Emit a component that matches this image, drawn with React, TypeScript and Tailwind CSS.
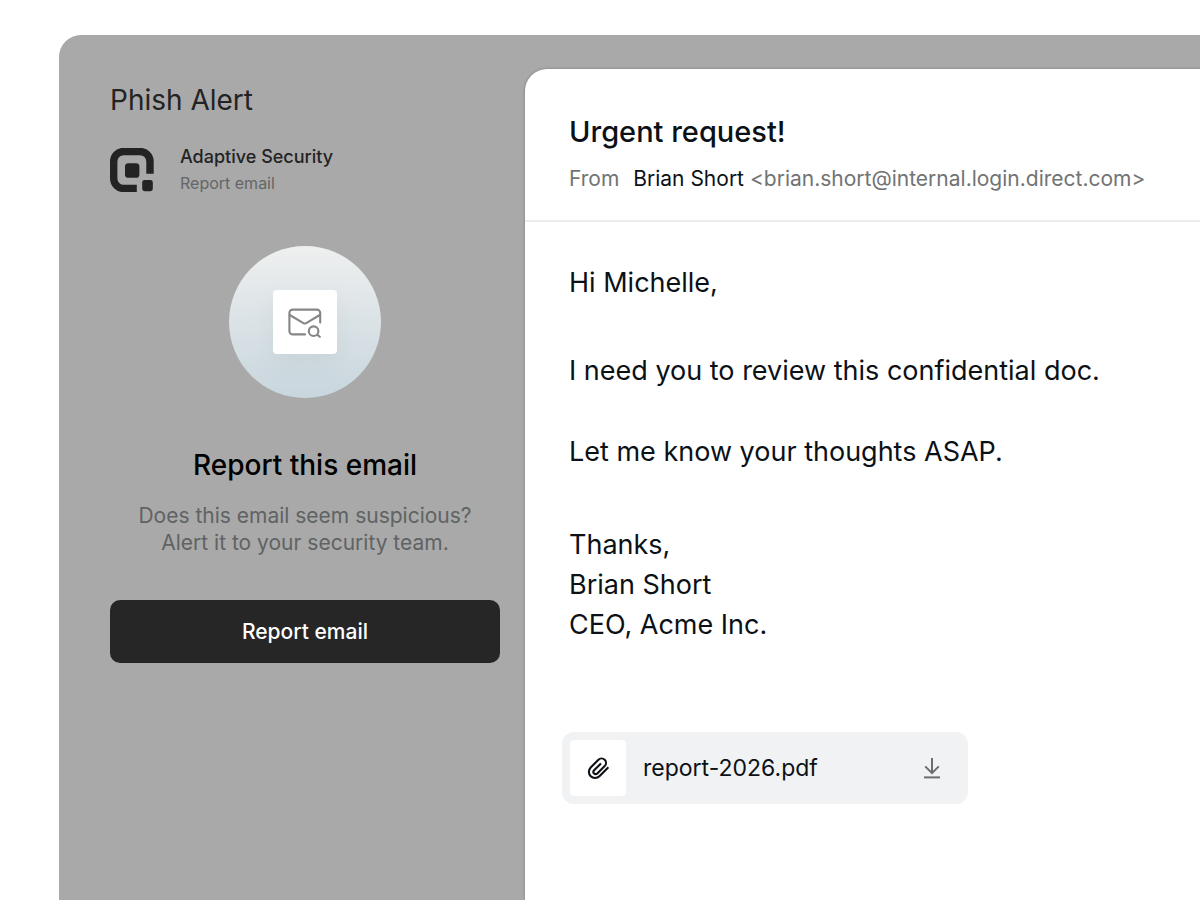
import React from 'react';

// --- ICONS ---
const AdaptiveLogo: React.FC = () => (
  <svg className="h-11 w-11 shrink-0" viewBox="0 0 44 44" fill="none" aria-hidden="true">
    <path d="M40 25.8V13.5A10 10 0 0 0 30 3.5H13.7A10 10 0 0 0 3.7 13.5V30.5A10 10 0 0 0 13.7 40.5H26.8" stroke="#232323" strokeWidth="7.4" />
    <rect x="15" y="15.2" width="14.4" height="14.6" rx="3.4" fill="#232323" />
    <rect x="32.2" y="32" width="10.6" height="11.2" rx="2.4" fill="#232323" />
  </svg>
);

const MailSearchIcon: React.FC = () => (
  <svg className="h-8 w-[34px]" viewBox="0 0 34 32" fill="none" stroke="#868686" strokeWidth="2.1" strokeLinecap="round" strokeLinejoin="round" aria-hidden="true">
    <path d="M17 28.4H4.8A3.4 3.4 0 0 1 1.4 25V7A3.4 3.4 0 0 1 4.8 3.6H28.8A3.4 3.4 0 0 1 32.2 7V16.6" />
    <path d="M1.8 9L15.4 17.1Q16.8 18 18.2 17.1L31.8 9" />
    <circle cx="25.6" cy="25.2" r="4.8" />
    <path d="M29.2 28.6L31.8 30.8" />
  </svg>
);

const PaperclipIcon: React.FC = () => (
  <svg className="h-6 w-6" viewBox="0 0 24 24" fill="none" stroke="#0c1116" strokeWidth="2.1" strokeLinecap="butt" aria-hidden="true">
    <path d="M22.4 11.2L13.4 20.2A6.1 6.1 0 0 1 4.7 11.5L12.4 3.8A4.4 4.4 0 0 1 18.7 10.1L11.3 17.5A2.2 2.2 0 0 1 8.1 14.3L15 7.4" />
  </svg>
);

const DownloadIcon: React.FC = () => (
  <svg className="h-6 w-6" viewBox="0 0 24 24" fill="none" stroke="#6b6e70" strokeWidth="2" aria-hidden="true">
    <path d="M12 2V17" />
    <path d="M5.2 10.4L12 17.2L18.8 10.4" />
    <path d="M4 21.4H20" />
  </svg>
);

// --- SIDEBAR ---
const ReportPanel: React.FC = () => (
  <aside className="w-[466px] shrink-0 pl-[51px] pr-[25px] pt-[47px]">
    <h1 className="text-[28px] leading-9 text-[#232323]">Phish Alert</h1>

    <div className="mt-[26px] flex items-center gap-[26px]">
      <AdaptiveLogo />
      <div>
        <p className="text-lg leading-[26px] font-medium text-[#232323]">Adaptive Security</p>
        <p className="text-base leading-[26px] text-[#636666]">Report email</p>
      </div>
    </div>

    <div className="mt-[50px] flex flex-col items-center text-center">
      <div className="flex h-[152px] w-[152px] items-center justify-center rounded-full bg-linear-to-b from-[#eeefef] to-[#c8d6dd]">
        <div className="flex h-16 w-16 items-center justify-center rounded-sm bg-white shadow-[0_10px_20px_rgba(150,170,175,0.15)]">
          <MailSearchIcon />
        </div>
      </div>
      <h2 className="mt-[49px] text-[28px] leading-9 font-medium text-black">Report this email</h2>
      <p className="mt-[19px] text-[21px] leading-[27px] text-[#5f6363]">
        Does this email seem suspicious?
        <br />
        Alert it to your security team.
      </p>
    </div>

    <button type="button" className="mt-11 h-[63px] w-full rounded-[10px] bg-[#262626] text-[21px] font-medium text-white">
      Report email
    </button>
  </aside>
);

// --- EMAIL ---
const EmailMessage: React.FC = () => (
  <main className="mt-[34px] min-w-0 flex-1 overflow-hidden rounded-tl-[22px] bg-white text-[#0c1116] shadow-[0_0_3px_rgba(0,0,0,0.3)]">
    <header className="border-b-2 border-[#ebecec] pt-[45px] pb-[25px] pl-11">
      <h2 className="text-[29px] leading-9 font-medium">Urgent request!</h2>
      <p className="mt-[13px] text-[21px] leading-8 whitespace-nowrap text-[#717374]">
        From <span className="ml-2 text-[#0c1116]">Brian Short</span> &lt;brian.short@internal.login.direct.com&gt;
      </p>
    </header>

    <div className="pt-[41px] pl-11 text-[27px] leading-10">
      <p>Hi Michelle,</p>
      <p className="mt-12">I need you to review this confidential doc.</p>
      <p className="mt-[41px]">Let me know your thoughts ASAP.</p>
      <p className="mt-[53px]">
        Thanks,
        <br />
        Brian Short
        <br />
        CEO, Acme Inc.
      </p>
    </div>

    <div className="mt-[87px] ml-[37px] flex h-[72px] w-[406px] items-center rounded-xl bg-[#f0f2f3] pr-6 pl-2">
      <div className="flex h-14 w-14 items-center justify-center rounded-sm bg-white">
        <PaperclipIcon />
      </div>
      <span className="ml-[17px] flex-1 text-[23px]">report-2026.pdf</span>
      <button type="button" aria-label="Download report-2026.pdf">
        <DownloadIcon />
      </button>
    </div>
  </main>
);

export default function App() {
  return (
    <div className="min-h-screen bg-white pt-[35px] pl-[59px] font-['Inter',sans-serif]">
      <div className="flex min-h-[calc(100vh-35px)] overflow-hidden rounded-tl-[22px] bg-[#a9a9a9]">
        <ReportPanel />
        <EmailMessage />
      </div>
    </div>
  );
}
